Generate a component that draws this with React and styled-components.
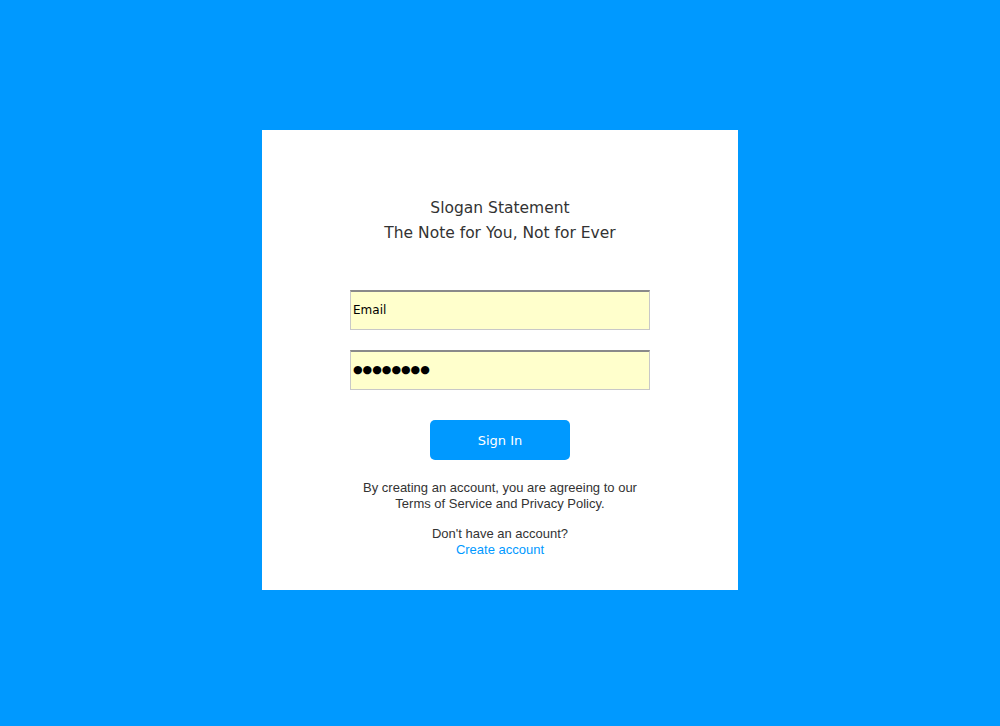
import React from "react";
import styled, { createGlobalStyle } from "styled-components";

const Global = createGlobalStyle`
  html, body { margin: 0; padding: 0; background: #0099ff; }
  body { min-height: 726px; }
`;

const Page = styled.div`
  display: flex;
  justify-content: center;
  padding-top: 130px;
  min-height: 726px;
  box-sizing: border-box;
`;

const Card = styled.div`
  width: 476px;
  height: 460px;
  background: #ffffff;
  box-sizing: border-box;
  padding-top: 66px;
  display: flex;
  flex-direction: column;
  align-items: center;
`;

const Slogan = styled.h1`
  margin: 0;
  font-family: "DejaVu Sans", "Lucida Grande", sans-serif;
  font-weight: normal;
  font-size: 15.5px;
  line-height: 25px;
  color: #333333;
  text-align: center;
`;

const Form = styled.form`
  margin-top: 44px;
  display: flex;
  flex-direction: column;
  align-items: center;
  gap: 20px;
`;

const Field = styled.input`
  width: 300px;
  height: 40px;
  box-sizing: border-box;
  background: #ffffcc;
  border: 1px solid #c8c8c8;
  border-top: 2px solid #8a8a8a;
  padding: 0 2px 2px;
  margin: 0;
  outline: none;
  color: #000;
  font-family: "DejaVu Sans", "Lucida Grande", sans-serif;
  font-size: ${(p) => (p.$dots ? "11px" : "12px")};
`;

const Button = styled.button`
  margin-top: 30px;
  width: 140px;
  height: 40px;
  border: none;
  border-radius: 5px;
  background: #0099ff;
  color: #ffffff;
  font-family: "DejaVu Sans", "Lucida Grande", sans-serif;
  font-size: 13px;
  cursor: pointer;
`;

const Note = styled.p`
  margin: ${(p) => p.$mt || "0"} 0 0;
  font-family: "Liberation Sans", Arial, sans-serif;
  font-size: 13px;
  line-height: 16px;
  color: #333333;
  text-align: center;
`;

const Link = styled.a`
  color: #0099ff;
  text-decoration: none;
`;

export default function App() {
  return (
    <>
      <Global />
      <Page>
        <Card>
          <Slogan>
            Slogan Statement
            <br />
            The Note for You, Not for Ever
          </Slogan>
          <Form onSubmit={(e) => e.preventDefault()}>
            <Field type="text" value="Email" readOnly />
            <Field type="text" $dots value="●●●●●●●●" readOnly />
          </Form>
          <Button type="button">Sign In</Button>
          <Note $mt="20px">
            By creating an account, you are agreeing to our
            <br />
            Terms of Service and Privacy Policy.
          </Note>
          <Note $mt="14px">
            Don't have an account?
            <br />
            <Link href="#">Create account</Link>
          </Note>
        </Card>
      </Page>
    </>
  );
}
